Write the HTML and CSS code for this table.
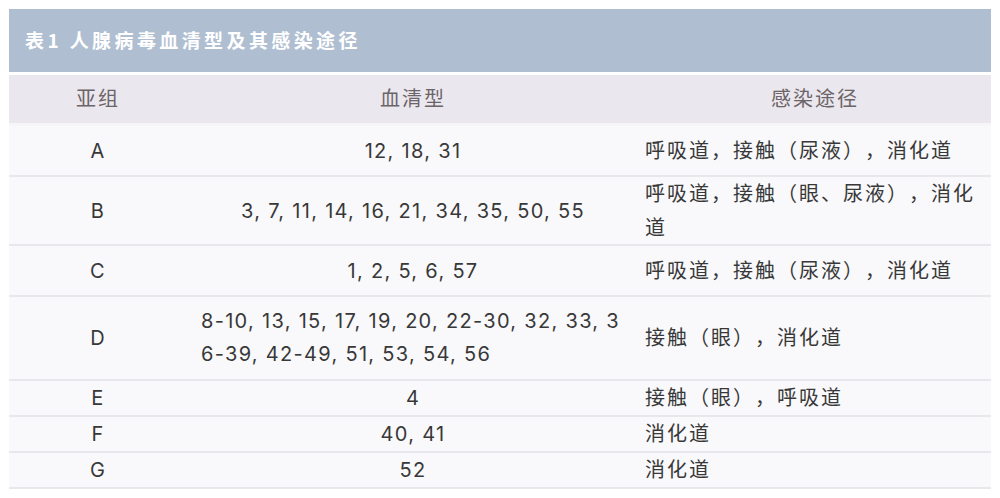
FILE: index.html
```html
<!DOCTYPE html>
<html lang="zh">
<head>
<meta charset="utf-8">
<link rel="stylesheet" href="styles.css">
</head>
<body>
<div class="wrap">
  <div class="title">表1 人腺病毒血清型及其感染途径</div>
  <div class="table">
    <div class="row head">
      <div class="c1">亚组</div>
      <div class="c2">血清型</div>
      <div class="c3 center">感染途径</div>
    </div>
    <div class="row r49">
      <div class="c1">A</div>
      <div class="c2">12, 18, 31</div>
      <div class="c3">呼吸道，接触（尿液），消化道</div>
    </div>
    <div class="row r67">
      <div class="c1">B</div>
      <div class="c2">3, 7, 11, 14, 16, 21, 34, 35, 50, 55</div>
      <div class="c3">呼吸道，接触（眼、尿液），消化道</div>
    </div>
    <div class="row r49">
      <div class="c1">C</div>
      <div class="c2">1, 2, 5, 6, 57</div>
      <div class="c3">呼吸道，接触（尿液），消化道</div>
    </div>
    <div class="row r82">
      <div class="c1">D</div>
      <div class="c2 brk"><span>8-10, 13, 15, 17, 19, 20, 22-30, 32, 33, 36-39, 42-49, 51, 53, 54, 56</span></div>
      <div class="c3">接触（眼），消化道</div>
    </div>
    <div class="row r34">
      <div class="c1">E</div>
      <div class="c2">4</div>
      <div class="c3">接触（眼），呼吸道</div>
    </div>
    <div class="row r34">
      <div class="c1">F</div>
      <div class="c2">40, 41</div>
      <div class="c3">消化道</div>
    </div>
    <div class="row r34">
      <div class="c1">G</div>
      <div class="c2">52</div>
      <div class="c3">消化道</div>
    </div>
  </div>
</div>
</body>
</html>
```

FILE: styles.css
```css
html, body {
  margin: 0;
  padding: 0;
  background: #ffffff;
}
body {
  font-family: Inter, "Noto Sans CJK SC", sans-serif;
  text-spacing-trim: space-all;
}
.wrap {
  width: 982px;
  margin: 9px 0 0 9px;
}
.title {
  height: 63px;
  background: #afbed1;
  color: #ffffff;
  font-weight: 700;
  font-size: 19px;
  letter-spacing: 3.4px;
  display: flex;
  align-items: center;
  padding: 0 0 2px 16px;
  box-sizing: border-box;
  font-family: "Noto Sans CJK SC", sans-serif;
}
.table {
  margin-top: 3px;
  display: flex;
  flex-direction: column;
}
.row {
  display: grid;
  grid-template-columns: 178px 452px 352px;
  background: #f9f8fb;
  border-bottom: 2px solid #e9e7ec;
  box-sizing: border-box;
  font-size: 20px;
  line-height: 34px;
  color: #383838;
  letter-spacing: 1.3px;
}
.row > div {
  display: flex;
  align-items: center;
  box-sizing: border-box;
}
.c1 {
  justify-content: center;
}
.c2 {
  justify-content: center;
  text-align: center;
  padding: 0 14px;
}
.c3 {
  padding: 0 10px 0 6px;
  letter-spacing: 2px;
}
.c3.center {
  justify-content: center;
  padding: 0;
}
.brk {
  word-break: break-all;
}
.brk span {
  text-align: left;
  line-height: 33px;
}
.head {
  height: 51px;
  background: #ebe7ee;
  color: #6b6468;
  border-bottom: 3px solid #f6f5f8;
  letter-spacing: 2px;
}
.r49 { height: 51px; }
.r67 { height: 69px; }
.r82 { height: 84px; }
.r34 { height: 36px; }
```
